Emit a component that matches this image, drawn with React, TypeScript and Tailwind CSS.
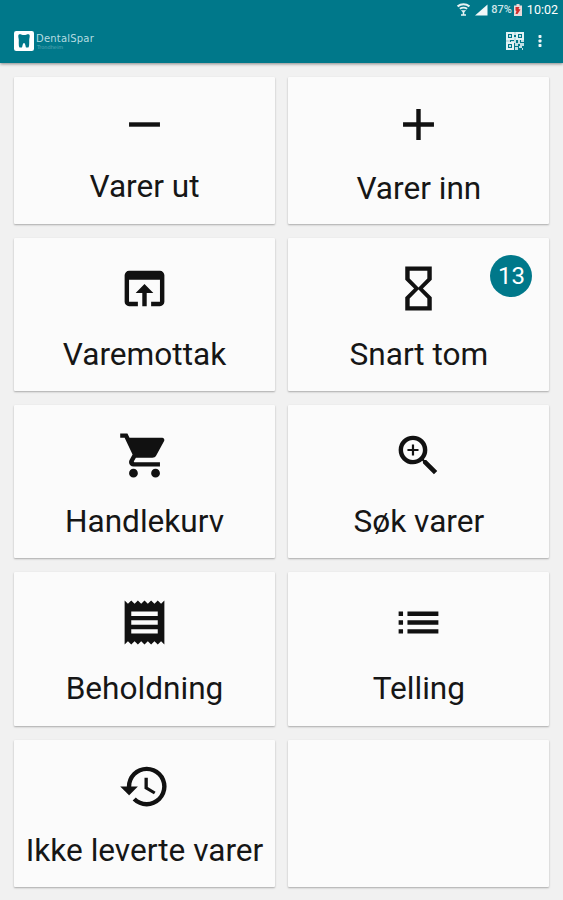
import type { IconType } from "react-icons";
import {
  MdAdd,
  MdHistory,
  MdHourglassEmpty,
  MdList,
  MdOpenInBrowser,
  MdReceipt,
  MdRemove,
  MdShoppingCart,
  MdZoomIn,
} from "react-icons/md";

type Tile = {
  label: string;
  icon: IconType;
  badge?: number;
  className?: string;
};

const tiles: Tile[] = [
  { label: "Varer ut", icon: MdRemove, className: "pt-[20.500px] gap-[18.500px]" },
  { label: "Varer inn", icon: MdAdd, className: "pt-[20.500px] gap-[20.500px]" },
  { label: "Varemottak", icon: MdOpenInBrowser },
  { label: "Snart tom", icon: MdHourglassEmpty, badge: 13 },
  { label: "Handlekurv", icon: MdShoppingCart },
  { label: "Søk varer", icon: MdZoomIn },
  { label: "Beholdning", icon: MdReceipt },
  { label: "Telling", icon: MdList },
  { label: "Ikke leverte varer", icon: MdHistory, className: "pt-[20px] gap-[20px]" },
];

const StatusBar = () => (
  <div className="flex h-[19px] items-center justify-end pr-[5px] text-white">
    {/* Wifi */}
    <svg className="mr-[5px] h-[13px] w-[13px]" viewBox="0 0 13 13" fill="none" stroke="#e8f3f4">
      <path d="M0.6 3.400C4 0.600 9 0.600 12.400 3.400" strokeWidth="2" />
      <path d="M2.800 5.800C5 4.300 8 4.300 10.200 5.800" strokeWidth="1.700" />
      <path d="M3.800 7.300h5.400L6.500 10z" fill="#e8f3f4" stroke="none" />
      <path d="M4 12h5M6.500 9v3" strokeWidth="1.500" />
    </svg>
    {/* Signal */}
    <svg className="mr-[3px] h-[12px] w-[13px]" viewBox="0 0 13 12">
      <path d="M0 11.500 12.500 0.500v11z" fill="#f2f8f9" />
    </svg>
    <span className="text-[11px] leading-none font-medium text-[#cfe5e8]">87%</span>
    {/* Battery */}
    <svg className="mr-[5px] ml-[2px] h-[12px] w-[8px]" viewBox="0 0 8 12">
      <path d="M2.500 0h3v1.500H8V12H0V1.500h2.500z" fill="#e9d9d9" />
      <path d="M1.500 3h4L4.500 5l2 .5-3 4.500H1.500l1-3-1-.5z" fill="#d02f2d" />
    </svg>
    <span className="pt-px text-[12.500px] leading-none">10:02</span>
  </div>
);

const Logo = () => (
  <div className="flex items-center">
    <svg className="h-[20px] w-[20px]" viewBox="0 0 20 20">
      <rect width="20" height="20" rx="2.200" fill="#fff" />
      <path
        d="M4.800 3.500c1.500-.8 3 .5 5.200.5s3.700-1.300 5.200-.5c1.200 1.200 0 3.500 0 5.500s.3 7.500-1 7.500h-2c-.8 0-.6-4.500-2.200-4.500s-1.400 4.500-2.200 4.500h-2c-1.300 0-1-5.500-1-7.500s-1.200-4.300 0-5.500z"
        fill="#00788a"
      />
    </svg>
    <div className="ml-[2px] flex flex-col pt-px font-['DejaVu_Sans']">
      <span className="text-[10px] leading-[10px] tracking-[0.200px] text-[#b5dce1]">DentalSpar</span>
      <span className="ml-px text-[5px] leading-[6px] text-[#5ba9b5]">Trondheim</span>
    </div>
  </div>
);

const QrIcon = () => (
  <svg className="h-[18px] w-[18px]" viewBox="0 0 18 18" fill="none" stroke="#e3f1f3">
    <path d="M1 1h6v6H1zM11 1h6v6h-6zM1 11h6v6H1z" strokeWidth="2" />
    <path
      d="M3 3h2v2H3zM13 3h2v2h-2zM3 13h2v2H3zM8 0h2v3H8zM8 5h2v4H8zM0 8h4v2H0zM5 9h5v2H5zM9 11h3v3H9zM12 8h2v4h-2zM15 8h3v2h-3zM14 11h4v3h-2v2h-3v-2h1zM9 15h3v3H9zM16 16h1v2h-1z"
      fill="#e3f1f3"
      fillOpacity="0.85"
      stroke="none"
    />
  </svg>
);

const MoreIcon = () => (
  <svg className="h-[14px] w-[4px]" viewBox="0 0 4 14" fill="#eff7f8">
    <rect x="0.500" y="1" width="3" height="3" rx="0.800" />
    <rect x="0.500" y="5.500" width="3" height="3" rx="0.800" />
    <rect x="0.500" y="10" width="3" height="3" rx="0.800" />
  </svg>
);

const TileCard = ({ label, icon: Icon, badge, className = "pt-[23.500px] gap-[22.500px]" }: Tile) => (
  <div
    className={`relative flex flex-col items-center rounded-[1px] bg-[#fbfbfb] shadow-[0_1px_2px_rgba(0,0,0,0.3)] ${className}`}
  >
    <Icon className="h-[53px] w-[53px] shrink-0 text-[#111]" />
    <span className="text-[31.600px] leading-[36px] whitespace-nowrap text-[#161616]">{label}</span>
    {badge !== undefined && (
      <span className="absolute top-[17px] right-[17px] flex h-[42px] w-[42px] items-center justify-center rounded-full bg-[#00788a] text-[24px] text-white">
        {badge}
      </span>
    )}
  </div>
);

export default function App() {
  return (
    <div className="flex h-[900px] w-[563px] flex-col overflow-hidden bg-[#f1f1f1] font-[Roboto,sans-serif]">
      <header className="z-10 h-[63px] shrink-0 bg-[#00788a] shadow-[0_1px_3px_rgba(0,0,0,0.45)]">
        <StatusBar />
        <div className="flex h-[44px] items-center justify-between pr-[21px] pl-[14px]">
          <Logo />
          <div className="flex items-center gap-[14px]">
            <QrIcon />
            <MoreIcon />
          </div>
        </div>
      </header>

      <main className="grid grid-cols-[261px_261px] grid-rows-[147px_153px_153px_154px_147px] gap-x-[13.400px] gap-y-[14px] pt-[14px] pl-[14px]">
        {tiles.map((tile) => (
          <TileCard key={tile.label} {...tile} />
        ))}
        <div className="rounded-[1px] bg-[#fbfbfb] shadow-[0_1px_2px_rgba(0,0,0,0.3)]" />
      </main>
    </div>
  );
}
